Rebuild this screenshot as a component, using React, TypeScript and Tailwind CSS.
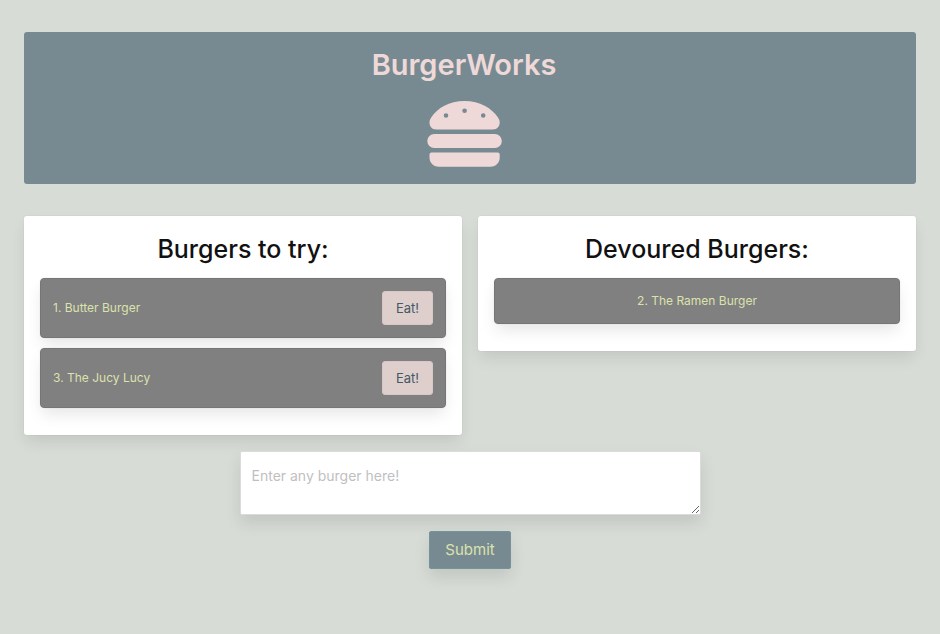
import type { ReactNode } from "react";

type Burger = { id: number; name: string };

const toTry: Burger[] = [
  { id: 1, name: "Butter Burger" },
  { id: 3, name: "The Jucy Lucy" },
];

const devoured: Burger[] = [{ id: 2, name: "The Ramen Burger" }];

function BurgerIcon() {
  return (
    <svg width="75" height="66" viewBox="0 0 75 66" fill="#efd9d8" aria-hidden="true">
      <path
        fillRule="evenodd"
        d="M9.5 28.5 C4.5 28.5 2.5 25 2.5 21.5 C2.5 19.5 3.2 18 4.2 16.5 C10.5 7 22 0 37.5 0 C53 0 64.5 7 71 16.5 C72 18 72.7 19.5 72.7 21.5 C72.7 25 70.5 28.5 65.7 28.5 Z M19 12.2 a2.3 2.3 0 1 0 0 4.6 a2.3 2.3 0 1 0 0 -4.6 Z M37.6 7.5 a2.3 2.3 0 1 0 0 4.6 a2.3 2.3 0 1 0 0 -4.6 Z M56.2 12.2 a2.3 2.3 0 1 0 0 4.6 a2.3 2.3 0 1 0 0 -4.6 Z"
      />
      <rect x="0.3" y="33" width="74.5" height="14" rx="7" />
      <path d="M4.5 51.6 H70.7 Q72.7 51.6 72.7 53.6 V56.5 C72.7 61.8 68.8 65.7 63.5 65.7 H11.7 C6.4 65.7 2.5 61.8 2.5 56.5 V53.6 Q2.5 51.6 4.5 51.6 Z" />
    </svg>
  );
}

function Panel({ title, children }: { title: string; children: ReactNode }) {
  return (
    <section className="flex-1 rounded-[3px] bg-white p-4 shadow-[0_8px_16px_-2px_rgba(10,10,10,0.1),0_0_0_1px_rgba(10,10,10,0.02)]">
      <h2 className="mb-3 text-center text-[25px] leading-[34px] font-medium text-[#111111]">{title}</h2>
      <ul className="pb-[11px]">{children}</ul>
    </section>
  );
}

const rowClass =
  "flex items-center rounded border border-[#767676] bg-[#808080] p-3 text-xs leading-5 text-[#dbe2ad] shadow-[0_8px_16px_-2px_rgba(10,10,10,0.1),0_0_0_1px_rgba(10,10,10,0.02)]";

export default function App() {
  return (
    <main className="min-h-screen bg-[#d7ddd6] px-6 py-8 font-['Inter','Liberation_Sans',sans-serif]">
      <header className="flex flex-col items-center rounded-[3px] bg-[#788a91] pt-[13px] pr-3 pb-[17px]">
        <h1 className="mb-4 text-[29px] leading-10 font-semibold text-[#efd9d8]">BurgerWorks</h1>
        <BurgerIcon />
      </header>

      <div className="mt-8 flex items-start gap-4">
        <Panel title="Burgers to try:">
          {toTry.map((b) => (
            <li key={b.id} className={`${rowClass} mb-[10px] justify-between last:mb-0`}>
              <span>
                {b.id}. {b.name}
              </span>
              <button
                type="button"
                className="rounded-[3px] border border-[#d6c8c6] bg-[#decfcd] px-[13px] py-[6px] text-[13px] leading-5 text-[#465866]"
              >
                Eat!
              </button>
            </li>
          ))}
        </Panel>
        <Panel title="Devoured Burgers:">
          {devoured.map((b) => (
            <li key={b.id} className={`${rowClass} justify-center`}>
              {b.id}. {b.name}
            </li>
          ))}
        </Panel>
      </div>

      <form className="mt-4 flex flex-col items-center gap-4" onSubmit={(e) => e.preventDefault()}>
        <textarea
          aria-label="Burger name"
          rows={1}
          placeholder="Enter any burger here!"
          className="block h-16 w-[461px] max-w-full resize rounded-[2px] border border-[#dbdbdb] bg-white px-[11px] py-3 text-sm leading-6 text-[#363636] shadow-[0_8px_16px_rgba(10,10,10,0.1)] placeholder:text-[#bfbfbf]"
        />
        <button
          type="submit"
          className="rounded-[2px] border border-[#76929a] bg-[#788a91] px-[15px] py-[6px] text-[15px] leading-6 text-[#dbe2ad] shadow-[0_8px_16px_rgba(10,10,10,0.1)]"
        >
          Submit
        </button>
      </form>
    </main>
  );
}
